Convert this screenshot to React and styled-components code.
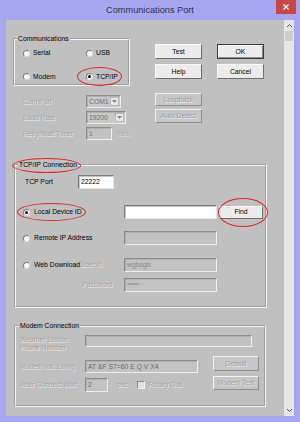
import React from "react";
import styled, { createGlobalStyle } from "styled-components";

const GlobalStyle = createGlobalStyle`
  html, body { margin: 0; padding: 0; background: #fff; }
  body { font-family: "Liberation Sans", Arial, sans-serif; }
`;

const Window = styled.div`
  width: 300px;
  height: 422px;
  background: #a7a7ef;
  display: flex;
  flex-direction: column;
  font-family: "Liberation Sans", Arial, sans-serif;
  font-size: 6.8px;
  line-height: 8px;
  color: #000;
`;

const TitleBar = styled.div`
  height: 20px;
  flex: none;
  display: grid;
  grid-template-columns: 1fr auto 1fr;
  align-items: center;
`;

const Title = styled.div`
  grid-column: 2;
  font-size: 9.2px;
  color: #2e2e4c;
  line-height: 12px;
`;

const CloseBtn = styled.div`
  grid-column: 3;
  justify-self: end;
  align-self: start;
  margin-right: 4px;
  width: 20px;
  height: 14px;
  background: #c94646;
  display: flex;
  align-items: center;
  justify-content: center;
`;

const Body = styled.div`
  flex: 1;
  display: flex;
  padding: 0 6px 6px 6px;
  min-height: 0;
`;

const Client = styled.div`
  flex: 1;
  display: flex;
  background: #c0c0c0;
`;

const Content = styled.div`
  flex: 1;
  display: flex;
  flex-direction: column;
  padding: 15px 0 0 7px;
`;

const ScrollBar = styled.div`
  width: 10px;
  background: #e6e6e6;
  display: flex;
  flex-direction: column;
  align-items: center;
`;

const ScrollArrow = styled.div`
  height: 11px;
  width: 10px;
  display: flex;
  align-items: center;
  justify-content: center;
`;

const Thumb = styled.div`
  width: 8px;
  height: 10px;
  background: #cdcdcd;
`;

const Spacer = styled.div`
  flex: 1;
`;

const Row = styled.div`
  display: flex;
  align-items: ${(p) => p.$align || "flex-start"};
  margin-top: ${(p) => p.$mt || 0}px;
  margin-left: ${(p) => p.$ml || 0}px;
`;

const Group = styled.fieldset`
  margin: 0 0 0 ${(p) => p.$ml || 0}px;
  padding: 0;
  width: ${(p) => p.$w}px;
  box-sizing: border-box;
  border: 2px groove #f4f4f4;
  min-width: 0;
`;

const Legend = styled.legend`
  position: relative;
  margin-left: ${(p) => p.$ml || 2}px;
  padding: 0 1px;
  line-height: 8px;
  white-space: nowrap;
`;

const Ellipse = styled.span`
  position: absolute;
  left: ${(p) => p.$l}px;
  top: ${(p) => p.$t}px;
  width: ${(p) => p.$w}px;
  height: ${(p) => p.$h}px;
  box-sizing: border-box;
  border: 1.2px solid #e0201e;
  border-radius: 50%;
  pointer-events: none;
`;

const RadioGrid = styled.div`
  display: grid;
  grid-template-columns: 63px auto;
  row-gap: 12px;
  padding: 6px 0 0 8px;
  height: 41px;
  box-sizing: border-box;
`;

const RadioItem = styled.label`
  position: relative;
  display: inline-flex;
  align-items: center;
  gap: ${(p) => p.$gap || 3}px;
  height: 8px;
  white-space: nowrap;
  justify-self: start;
`;

const RadioDot = styled.span`
  width: 7px;
  height: 7px;
  box-sizing: border-box;
  border-radius: 50%;
  background: #fff;
  border: 1px solid;
  border-color: #7c7c7c #dcdcdc #dcdcdc #7c7c7c;
  display: flex;
  align-items: center;
  justify-content: center;
  &::after {
    content: "";
    display: ${(p) => (p.$on ? "block" : "none")};
    width: 3px;
    height: 3px;
    border-radius: 50%;
    background: #000;
  }
`;

const ButtonGrid = styled.div`
  display: grid;
  grid-template-columns: 47px 47px;
  column-gap: 15px;
  row-gap: 5px;
  margin: 9px 0 0 25px;
`;

const Button = styled.div`
  position: relative;
  box-sizing: border-box;
  width: ${(p) => p.$w || 47}px;
  height: ${(p) => p.$h || 15}px;
  margin-top: ${(p) => p.$mt || 0}px;
  display: flex;
  align-items: center;
  justify-content: center;
  white-space: nowrap;
  background: ${(p) => (p.$disabled ? "#c6c6c6" : "#ececec")};
  border: 1px solid;
  border-color: ${(p) =>
    p.$default
      ? "#3a3a3a"
      : p.$disabled
      ? "#f2f2f2 #8e8e8e #8e8e8e #f2f2f2"
      : "#fafafa #6e6e6e #6e6e6e #fafafa"};
  box-shadow: ${(p) =>
    p.$default ? "inset 1px 1px #fff, inset -1px -1px #8a8a8a" : "none"};
  color: ${(p) => (p.$disabled ? "#9c9c9c" : "#000")};
  text-shadow: ${(p) => (p.$disabled ? "0.7px 0.7px 0 #f0f0f0" : "none")};
`;

const SideButtons = styled.div`
  display: flex;
  flex-direction: column;
  gap: ${(p) => p.$gap || 3}px;
`;

const FieldBlock = styled.div`
  width: ${(p) => p.$w}px;
  margin-left: ${(p) => p.$ml || 0}px;
  padding-top: ${(p) => p.$pt || 0}px;
  padding-bottom: ${(p) => p.$pb || 0}px;
  display: flex;
  flex-direction: column;
  gap: ${(p) => p.$gap || 0}px;
`;

const FieldRow = styled.div`
  display: flex;
  align-items: ${(p) => p.$align || "center"};
  height: ${(p) => (p.$h ? `${p.$h}px` : "auto")};
  margin-top: ${(p) => p.$mt || 0}px;
  padding-left: ${(p) => p.$pl || 0}px;
`;

const Label = styled.span`
  position: relative;
  flex: none;
  width: ${(p) => (p.$w ? `${p.$w}px` : "auto")};
  margin-left: ${(p) => p.$ml || 0}px;
  margin-top: ${(p) => p.$mt || 0}px;
  padding-right: ${(p) => p.$pr || 0}px;
  text-align: ${(p) => p.$right ? "right" : "left"};
  white-space: nowrap;
  color: ${(p) => (p.$disabled ? "#a2a2a2" : "#000")};
  text-shadow: ${(p) => (p.$disabled ? "0.7px 0.7px 0 #eeeeee" : "none")};
`;

const LeftCell = styled.div`
  width: ${(p) => p.$w}px;
  flex: none;
  display: flex;
  align-items: center;
  justify-content: ${(p) => p.$justify || "flex-start"};
`;

const Input = styled.div`
  box-sizing: border-box;
  flex: none;
  width: ${(p) => p.$w}px;
  height: ${(p) => p.$h || 14}px;
  padding: 0 2px;
  display: flex;
  align-items: center;
  overflow: hidden;
  white-space: nowrap;
  background: ${(p) => (p.$disabled ? "#c2c2c2" : "#fff")};
  border: 1px solid;
  border-color: ${(p) =>
    p.$disabled ? "#8a8a8a #eeeeee #eeeeee #8a8a8a" : "#7a7a7a #e6e6e6 #e6e6e6 #7a7a7a"};
  box-shadow: ${(p) => (p.$disabled ? "inset 1px 1px #b0b0b0" : "inset 1px 1px #c4c4c4")};
  color: ${(p) => p.$color || "#000"};
`;

const Combo = styled(Input)`
  padding-right: 1px;
  justify-content: space-between;
  background: #c8c8c8;
`;

const ComboArrow = styled.span`
  width: 9px;
  height: 9px;
  box-sizing: border-box;
  background: #e8e8e8;
  border: 1px solid #b8b8b8;
  display: flex;
  align-items: center;
  justify-content: center;
`;

const Check = styled.span`
  width: 8px;
  height: 8px;
  box-sizing: border-box;
  background: #e2e2e2;
  border: 1px solid;
  border-color: #8a8a8a #f2f2f2 #f2f2f2 #8a8a8a;
  margin-left: ${(p) => p.$ml || 0}px;
  margin-right: 4px;
  flex: none;
`;

const Anchor = styled.span`
  position: relative;
  display: inline-flex;
  margin-left: ${(p) => p.$ml || 0}px;
`;

const Radio = ({ label, on, gap, children }) => (
  <RadioItem $gap={gap}>
    <RadioDot $on={on} />
    <span>{label}</span>
    {children}
  </RadioItem>
);

const Arrow = ({ up }) => (
  <svg width="7" height="5" viewBox="0 0 7 5">
    <polyline
      points={up ? "1,4 3.5,1.5 6,4" : "1,1 3.5,3.5 6,1"}
      fill="none"
      stroke="#555"
      strokeWidth="1"
    />
  </svg>
);

const DownTri = () => (
  <svg width="5" height="3" viewBox="0 0 5 3">
    <polygon points="0,0 5,0 2.5,3" fill="#8a8a8a" />
  </svg>
);

export default function App() {
  return (
    <>
      <GlobalStyle />
      <Window>
        <TitleBar>
          <Title>Communications Port</Title>
          <CloseBtn>
            <svg width="6" height="6" viewBox="0 0 6 6">
              <path d="M0.5 0.5 L5.5 5.5 M5.5 0.5 L0.5 5.5" stroke="#fff" strokeWidth="1.2" />
            </svg>
          </CloseBtn>
        </TitleBar>
        <Body>
          <Client>
            <Content>
              <Row>
                <Group $w={117}>
                  <Legend>Communications</Legend>
                  <RadioGrid>
                    <Radio label="Serial" />
                    <Radio label="USB" />
                    <Radio label="Modem" />
                    <Radio label="TCP/IP" on>
                      <Ellipse $l={-9} $t={-6} $w={45} $h={19} />
                    </Radio>
                  </RadioGrid>
                </Group>
                <ButtonGrid>
                  <Button>Test</Button>
                  <Button $default>OK</Button>
                  <Button>Help</Button>
                  <Button>Cancel</Button>
                </ButtonGrid>
              </Row>

              <Row $mt={7}>
                <FieldBlock $w={132} $ml={10} $pt={2} $gap={3}>
                  <FieldRow $h={13}>
                    <Label $w={63} $disabled>Com Port</Label>
                    <Combo $w={35} $h={13} $disabled $color="#6c6c6c">
                      COM1
                      <ComboArrow><DownTri /></ComboArrow>
                    </Combo>
                  </FieldRow>
                  <FieldRow $h={13}>
                    <Label $w={63} $disabled>Baud Rate</Label>
                    <Combo $w={40} $h={13} $disabled $color="#6c6c6c">
                      19200
                      <ComboArrow><DownTri /></ComboArrow>
                    </Combo>
                  </FieldRow>
                  <FieldRow $h={13}>
                    <Label $w={63} $disabled>Retry/Wait Timer</Label>
                    <Input $w={26} $h={13} $disabled $color="#808080">1</Input>
                    <Label $ml={5} $disabled>min.</Label>
                  </FieldRow>
                </FieldBlock>
                <SideButtons $gap={3}>
                  <Button $disabled $h={13}>Loopback</Button>
                  <Button $disabled $h={14}>Auto Detect</Button>
                </SideButtons>
              </Row>

              <Row $mt={21}>
                <Group $w={253} $ml={1}>
                  <Legend>
                    TCP/IP Connection
                    <Ellipse $l={-6} $t={-3} $w={69} $h={15} />
                  </Legend>
                  <FieldBlock $pt={6} $pb={14}>
                    <FieldRow $h={14} $pl={9}>
                      <Label $w={53}>TCP Port</Label>
                      <Input $w={36}>22222</Input>
                    </FieldRow>
                    <FieldRow $h={14} $pl={7} $mt={16}>
                      <LeftCell $w={101}>
                        <Radio label="Local Device ID" on gap={4}>
                          <Ellipse $l={-6} $t={-5} $w={69} $h={18} />
                        </Radio>
                      </LeftCell>
                      <Input $w={93} />
                      <Anchor $ml={2}>
                        <Button $w={44} $h={13}>Find</Button>
                        <Ellipse $l={-1} $t={-8} $w={50} $h={29} />
                      </Anchor>
                    </FieldRow>
                    <FieldRow $h={14} $pl={7} $mt={12}>
                      <LeftCell $w={101}>
                        <Radio label="Remote IP Address" gap={4} />
                      </LeftCell>
                      <Input $w={93} $disabled />
                    </FieldRow>
                    <FieldRow $h={14} $pl={7} $mt={13}>
                      <LeftCell $w={101}>
                        <Radio label="Web Download" gap={4} />
                        <Label $ml="auto" $pr={13} $disabled>User Id</Label>
                      </LeftCell>
                      <Input $w={93} $disabled $color="#8a8a8a">wgbsgb</Input>
                    </FieldRow>
                    <FieldRow $h={14} $pl={7} $mt={6}>
                      <LeftCell $w={101} $justify="flex-end">
                        <Label $pr={12} $disabled>Password</Label>
                      </LeftCell>
                      <Input $w={93} $disabled $color="#8a8a8a">
                        <span style={{ fontSize: "5px", letterSpacing: "-0.5px" }}>********</span>
                      </Input>
                    </FieldRow>
                  </FieldBlock>
                </Group>
              </Row>

              <Row $mt={14}>
                <Group $w={252} $ml={1}>
                  <Legend $ml={3}>Modem Connection</Legend>
                  <FieldBlock $pt={5} $pb={13}>
                    <FieldRow $align="flex-start" $pl={4}>
                      <Label $w={65} $mt={1} $disabled>
                        Weather Station
                        <br />
                        Phone Number
                      </Label>
                      <Input $w={167} $h={12} $disabled />
                    </FieldRow>
                    <Row $mt={4} $ml={4}>
                      <FieldBlock $w={193} $pt={4} $gap={5}>
                        <FieldRow $h={13}>
                          <Label $w={65} $disabled>Modem Init. String</Label>
                          <Input $w={113} $h={13} $disabled $color="#6a6a6a">
                            AT &amp;F S7=60 E Q V X4
                          </Input>
                        </FieldRow>
                        <FieldRow $h={14}>
                          <Label $w={65} $disabled>After Connect Wait</Label>
                          <Input $w={23} $h={14} $disabled $color="#6a6a6a">2</Input>
                          <Label $ml={9} $disabled>sec</Label>
                          <Check $ml={9} />
                          <Label $disabled>Rotary Dial</Label>
                        </FieldRow>
                      </FieldBlock>
                      <SideButtons $gap={5}>
                        <Button $w={46} $h={15} $disabled>Default</Button>
                        <Button $w={46} $h={14} $disabled>Modem Test</Button>
                      </SideButtons>
                    </Row>
                  </FieldBlock>
                </Group>
              </Row>
            </Content>
            <ScrollBar>
              <ScrollArrow>
                <Arrow up />
              </ScrollArrow>
              <Thumb />
              <Spacer />
              <ScrollArrow>
                <Arrow />
              </ScrollArrow>
            </ScrollBar>
          </Client>
        </Body>
      </Window>
    </>
  );
}
